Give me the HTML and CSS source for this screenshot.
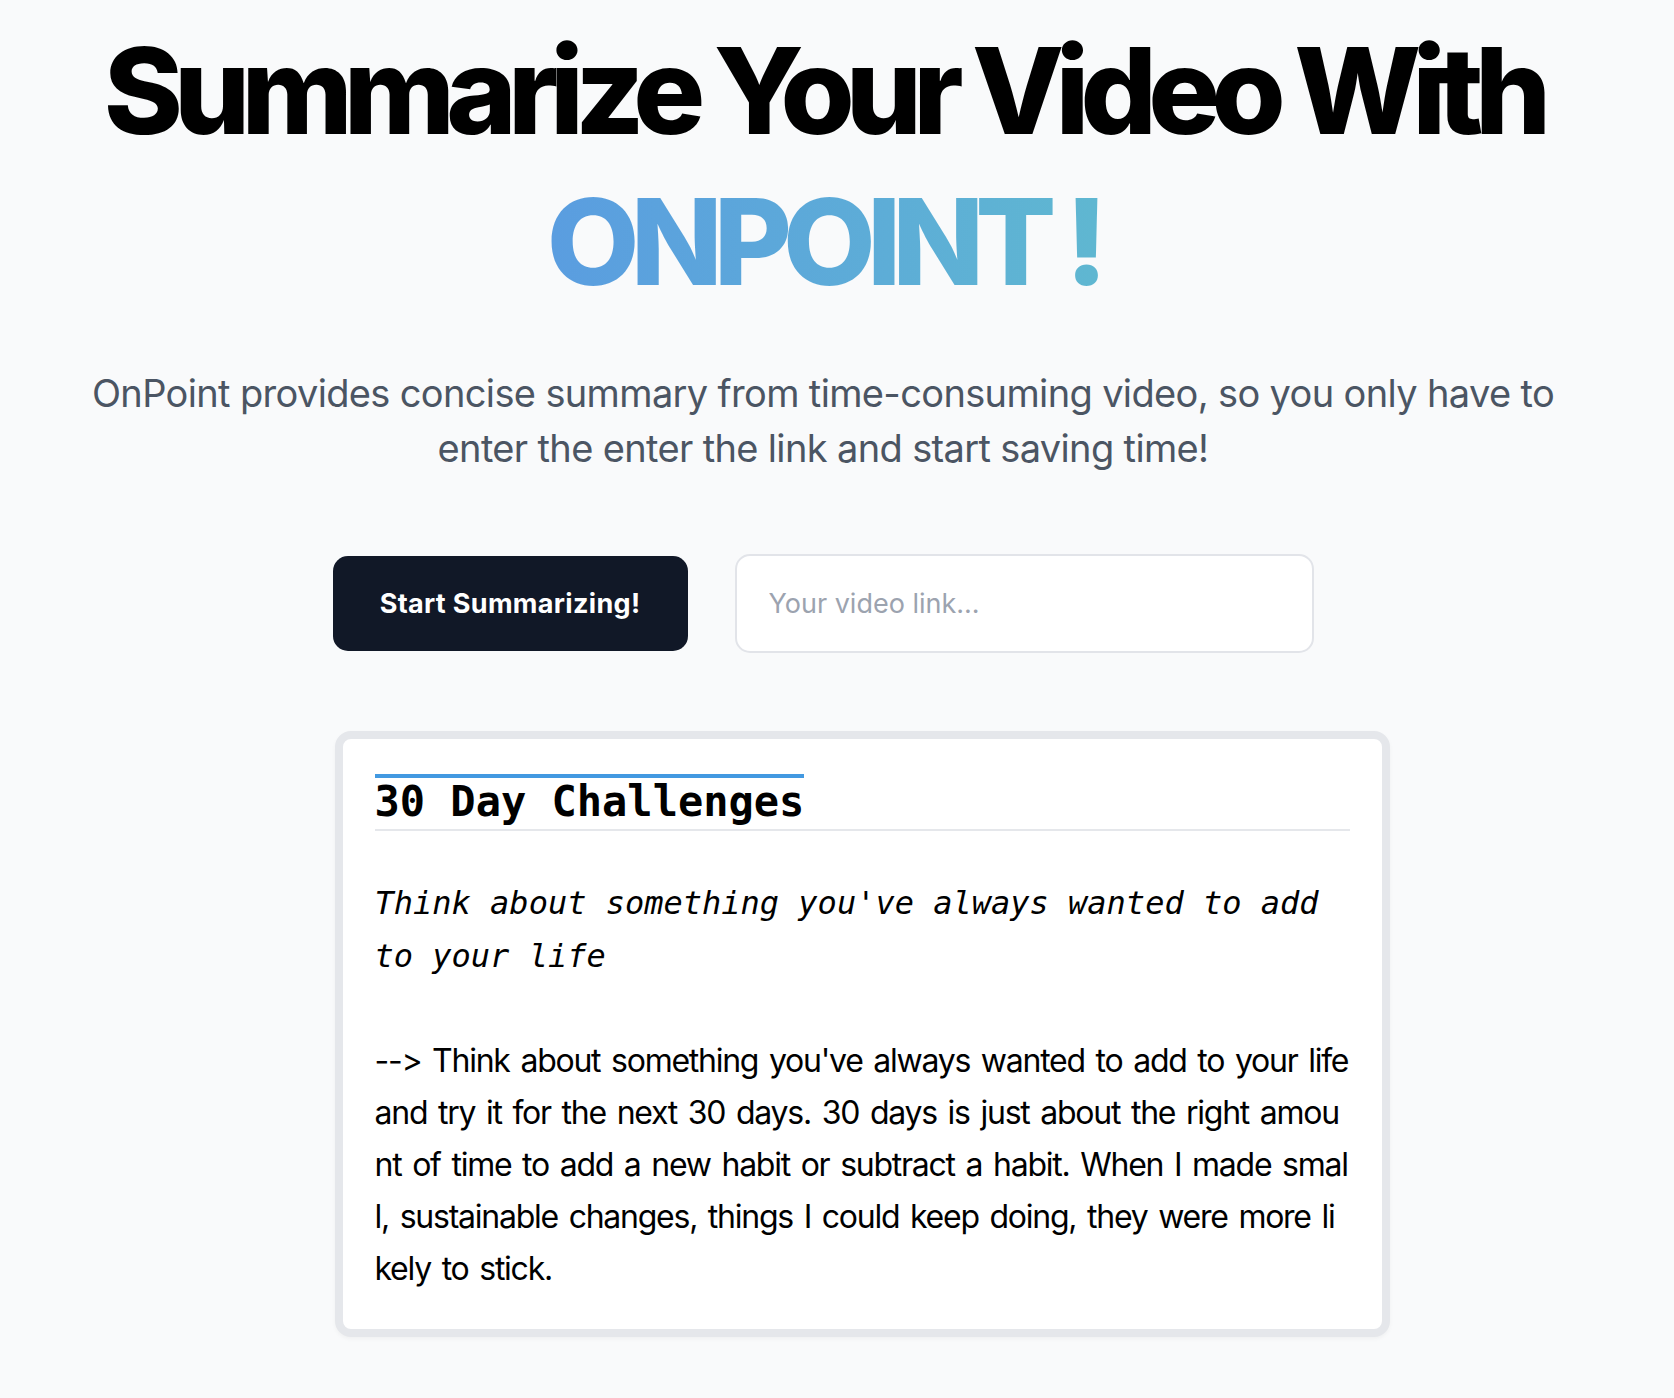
FILE: index.html
```html
<!DOCTYPE html>
<html lang="en">
<head>
<meta charset="utf-8">
<title>OnPoint</title>
<link rel="stylesheet" href="styles.css">
</head>
<body>
<main class="page">
  <h1 class="title">Summarize Your Video With<span class="brand">ONPOINT !</span></h1>
  <p class="lead">OnPoint provides concise summary from time-consuming video, so you only have to enter the enter the link and start saving time!</p>
  <section class="stack">
    <div class="actions">
      <button class="btn" type="button">Start Summarizing!</button>
      <input class="link-input" type="text" placeholder="Your video link...">
    </div>
    <article class="card">
      <h2 class="card-title"><span>30 Day Challenges</span></h2>
      <p class="card-sub">Think about something you've always wanted to add to your life</p>
      <p class="card-body">--&gt; Think about something you've always wanted to add to your life and try it for the next 30 days. 30 days is just about the right amount of time to add a new habit or subtract a habit. When I made small, sustainable changes, things I could keep doing, they were more likely to stick.</p>
    </article>
  </section>
</main>
</body>
</html>
```

FILE: styles.css
```css
html, body {
  margin: 0;
  padding: 0;
  background: #f9fafb;
}

body {
  font-family: Inter, "Noto Sans", sans-serif;
  font-feature-settings: "calt" 0;
  color: #000;
}

.page {
  display: flex;
  flex-direction: column;
  align-items: center;
  padding: 15px 28px 60px 0;
}

.title {
  margin: 0;
  font-family: Inter, sans-serif;
  font-weight: 800;
  font-size: 120px;
  line-height: 151px;
  letter-spacing: -0.074em;
  text-align: center;
  color: #000;
}

.brand {
  display: block;
  width: fit-content;
  margin: 0 auto;
  background: linear-gradient(to right, #5a9de0, #5fb7d1);
  -webkit-background-clip: text;
  background-clip: text;
  color: transparent;
}

.lead {
  margin: 49px 0 0;
  max-width: 1500px;
  font-size: 38px;
  line-height: 55px;
  letter-spacing: -0.017em;
  color: #4b5563;
  text-align: center;
}

.stack {
  width: 981px;
  display: flex;
  flex-direction: column;
  align-items: flex-start;
  margin-top: 78px;
}

.actions {
  display: flex;
  align-items: center;
  gap: 47px;
}

.btn {
  width: 355px;
  height: 95px;
  border: 0;
  border-radius: 15px;
  background: #111827;
  color: #fff;
  font-family: Inter, sans-serif;
  font-size: 27px;
  font-weight: 700;
  letter-spacing: 0.012em;
}

.link-input {
  box-sizing: border-box;
  width: 579px;
  height: 99px;
  padding: 0 32px;
  border: 2px solid #e2e4e9;
  border-radius: 15px;
  background: #fff;
  font-family: Inter, sans-serif;
  font-size: 27px;
  color: #111827;
  outline: none;
}

.link-input::placeholder {
  color: #9ca3af;
}

.card {
  box-sizing: border-box;
  width: 1055px;
  margin: 78px 0 0 2px;
  padding: 35px 32px 34px;
  background: #fff;
  border: 8px solid #e5e7eb;
  border-radius: 16px;
  box-shadow: 0 2px 4px rgba(0, 0, 0, 0.04);
}

.card-title {
  display: flex;
  margin: 0;
  padding-bottom: 3px;
  border-bottom: 2px solid #e5e7eb;
  font-family: "DejaVu Sans Mono", "Liberation Mono", monospace;
  font-weight: 700;
  font-size: 42px;
  line-height: 48px;
}

.card-title span {
  border-top: 4px solid #4299e1;
}

.card-sub {
  margin: 46px 0 0;
  font-family: "DejaVu Sans Mono", "Liberation Mono", monospace;
  font-style: italic;
  font-size: 32px;
  line-height: 53px;
}

.card-body {
  margin: 52px 0 0;
  font-size: 32px;
  line-height: 52px;
  letter-spacing: -1.25px;
  word-spacing: 3px;
  word-break: break-all;
}
```
